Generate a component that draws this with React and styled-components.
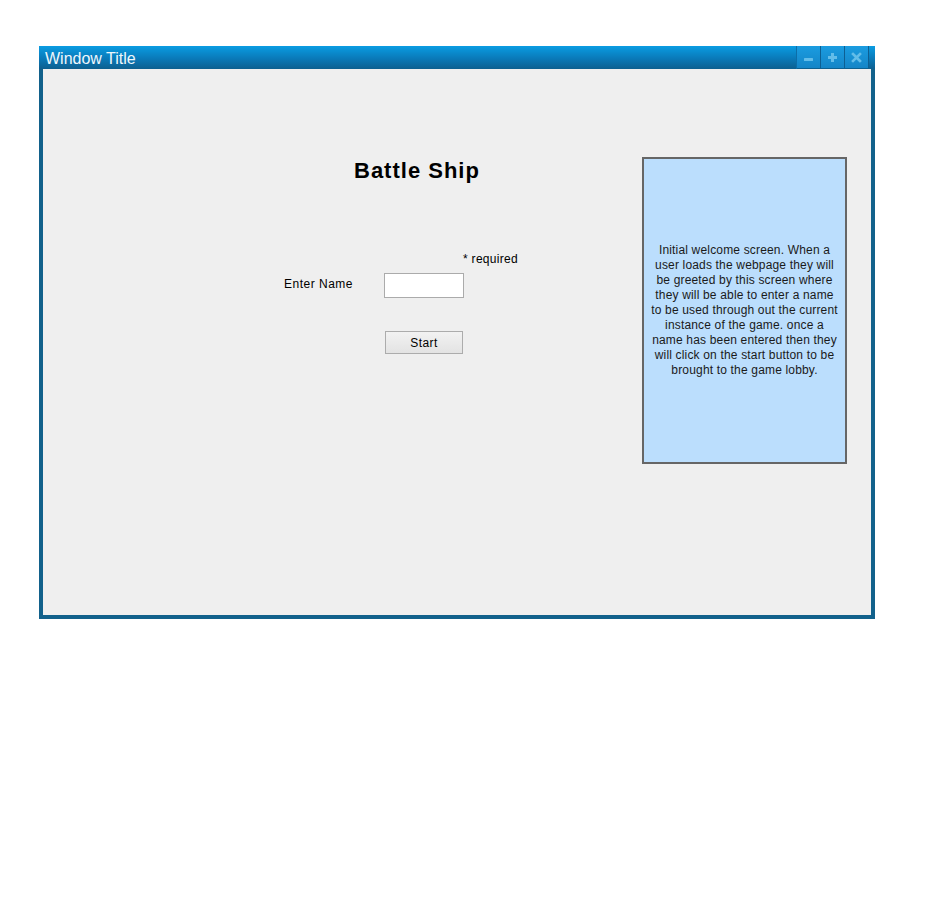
import styled, {createGlobalStyle} from "styled-components";

const GlobalStyle = createGlobalStyle`
    html, body {
        margin: 0;
        padding: 0;
        background: #ffffff;
    }
    body {
        font-family: "Liberation Sans", Arial, sans-serif;
    }
`;

export default function App() {
    return (
        <>
            <GlobalStyle/>
            <Page>
                <Window>
                    <TitleBar>
                        <TitleText>Window Title</TitleText>
                        <Controls>
                            <CtrlBtn aria-label="minimize">
                                <svg width="11" height="11" viewBox="0 0 11 11">
                                    <rect x="1" y="6" width="9" height="3" rx="0.5" fill="#63bde9"/>
                                </svg>
                            </CtrlBtn>
                            <CtrlBtn aria-label="maximize">
                                <svg width="11" height="11" viewBox="0 0 11 11">
                                    <path d="M4 1h3v3h3v3H7v3H4V7H1V4h3z" fill="#63bde9"/>
                                </svg>
                            </CtrlBtn>
                            <CtrlBtn aria-label="close">
                                <svg width="11" height="11" viewBox="0 0 11 11">
                                    <path d="M2 2l7 7M9 2l-7 7" stroke="#63bde9" strokeWidth="2.6" strokeLinecap="square"/>
                                </svg>
                            </CtrlBtn>
                        </Controls>
                    </TitleBar>
                    <Content>
                        <Form>
                            <Heading>Battle Ship</Heading>
                            <Required>* required</Required>
                            <Row>
                                <Label>Enter Name</Label>
                                <NameInput type="text"/>
                            </Row>
                            <StartBtn>Start</StartBtn>
                        </Form>
                        <Note>
                            Initial welcome screen. When a user loads the webpage they will be greeted by this
                            screen where they will be able to enter a name to be used through out the current
                            instance of the game. once a name has been entered then they will click on the start
                            button to be brought to the game lobby.
                        </Note>
                    </Content>
                </Window>
            </Page>
        </>
    )
}

const Page = styled.div`
    padding: 46px 0 0 39px;
`;
const Window = styled.div`
    width: 836px;
    height: 573px;
    box-sizing: border-box;
    border: 4px solid #12618b;
    border-top: none;
    display: flex;
    flex-direction: column;
    background: #efefef;
`;
const TitleBar = styled.div`
    height: 23px;
    margin: 0 -4px;
    background: linear-gradient(#0a9ce2, #0a79b8 55%, #0d5f8f);
    display: flex;
    align-items: center;
    justify-content: space-between;
    padding: 0 6px 0 6px;
`;
const TitleText = styled.span`
    color: #eef7fc;
    font-size: 16px;
    line-height: 23px;
    padding-top: 1px;
`;
const Controls = styled.div`
    display: flex;
    align-self: stretch;
    border-left: 1px solid #0c6ea8;
`;
const CtrlBtn = styled.div`
    width: 24px;
    height: 22px;
    display: flex;
    align-items: center;
    justify-content: center;
    background: linear-gradient(#1b9ce0, #1485c7);
    border-right: 1px solid #0d5f92;
    box-sizing: border-box;
`;
const Content = styled.div`
    flex: 1;
    display: flex;
    justify-content: space-between;
    align-items: flex-start;
    padding: 88px 24px 0 0;
`;
const Form = styled.div`
    margin-left: 241px;
    display: flex;
    flex-direction: column;
    align-items: flex-start;
`;
const Heading = styled.h1`
    margin: 1px 0 0 70px;
    font-size: 22px;
    font-weight: 700;
    line-height: 25px;
    letter-spacing: 1px;
    color: #000;
`;
const Required = styled.div`
    margin: 69px 0 0 179px;
    font-size: 12px;
    line-height: 14px;
    letter-spacing: 0.3px;
    color: #000;
`;
const Row = styled.div`
    margin-top: 7px;
    display: flex;
    align-items: center;
`;
const Label = styled.span`
    width: 100px;
    font-size: 12px;
    letter-spacing: 0.5px;
    padding-bottom: 3px;
    color: #000;
`;
const NameInput = styled.input`
    width: 80px;
    height: 25px;
    box-sizing: border-box;
    border: 1px solid #ababab;
    background: #fff;
    margin: 0;
    padding: 0 3px;
    outline: none;
`;
const StartBtn = styled.button`
    margin: 33px 0 0 101px;
    width: 78px;
    height: 23px;
    box-sizing: border-box;
    border: 1px solid #acacac;
    border-radius: 0;
    background: linear-gradient(#f2f2f2, #e3e3e3);
    font-family: "Liberation Sans", Arial, sans-serif;
    font-size: 12px;
    letter-spacing: 0.4px;
    color: #000;
    padding: 0;
`;
const Note = styled.div`
    width: 205px;
    height: 307px;
    box-sizing: border-box;
    border: 2px solid #666666;
    background: #bbdefd;
    display: flex;
    align-items: center;
    justify-content: center;
    text-align: center;
    padding: 0 6px;
    font-size: 12px;
    line-height: 15px;
    letter-spacing: 0.17px;
    color: #1a1a1a;
`;
